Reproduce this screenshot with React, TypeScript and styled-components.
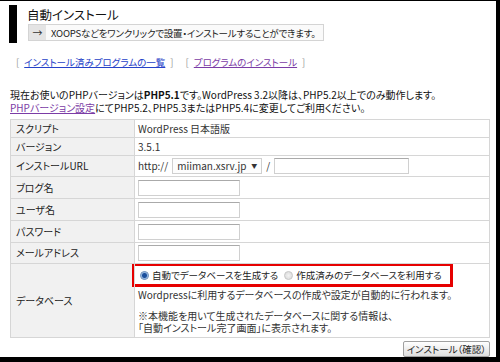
import React from 'react';
import styled, { createGlobalStyle } from 'styled-components';

const GlobalStyle = createGlobalStyle`
  html, body {
    margin: 0;
    padding: 0;
    background: #000;
  }
  body {
    font-family: "Noto Sans CJK JP", "Noto Sans", sans-serif;
    font-feature-settings: "palt";
    color: #222;
  }
  button {
    font-feature-settings: "palt";
  }
`;

const Page = styled.div`
  width: 500px;
  height: 362px;
  box-sizing: border-box;
  background: #fff;
  border-top: 1px solid #000;
  border-right: 4px solid #000;
  border-bottom: 5px solid #000;
  padding: 4px 7px 0 10px;
  font-size: 10px;
  overflow: hidden;
`;

const Header = styled.div`
  margin-left: -1px;
  border-left: 8px solid #000;
  padding: 0 0 3px 10px;
  height: 35px;
`;

const Title = styled.h1`
  margin: 0;
  font-size: 12.5px;
  font-weight: normal;
  line-height: 19px;
  color: #111;
`;

const Lead = styled.div`
  display: inline-flex;
  align-items: center;
  height: 15px;
  width: 294px;
  border: 1px solid #d4d4d4;
  background: #fafafa;
  font-size: 9.5px;
  letter-spacing: -0.2px;
  white-space: nowrap;
  margin-left: 1px;
  overflow: hidden;
`;

const Arrow = styled.span`
  display: flex;
  align-items: center;
  justify-content: center;
  width: 17px;
  height: 100%;
  background: #e4e4e4;
  color: #333;
  margin-right: 5px;
  font-size: 10px;
`;

const LinkRow = styled.div`
  display: flex;
  gap: 12px;
  margin-top: 13px;
  padding-left: 6px;
  font-size: 9.5px;
  line-height: 13px;
`;

const Bracket = styled.span`
  color: #999;
  display: inline-flex;
  gap: 5px;
`;

const Link = styled.a<{ $visited?: boolean }>`
  color: ${(p) => (p.$visited ? '#7b3ca6' : '#2641c8')};
  text-decoration: underline;
`;

const Notice = styled.p`
  margin: 20px 0 0;
  font-size: 10px;
  line-height: 12.5px;
  color: #111;
  white-space: nowrap;
`;

const Table = styled.table`
  margin-top: 5px;
  width: 480px;
  border-collapse: collapse;
  border: 1px solid #d6d6d6;
  font-size: 10px;
  line-height: 12px;
`;

const Row = styled.tr<{ $h: number }>`
  height: ${(p) => p.$h}px;
`;

const Label = styled.th`
  width: 113px;
  text-align: left;
  font-weight: normal;
  background: #f1f1f1;
  border: 1px solid #d6d6d6;
  padding: 0 5px;
  color: #222;
`;

const Cell = styled.td`
  border: 1px solid #d6d6d6;
  padding: 0 3px;
  color: #333;
`;

const TextInput = styled.span<{ $w: number }>`
  display: inline-block;
  vertical-align: middle;
  width: ${(p) => p.$w}px;
  height: 14px;
  border: 1px solid #d0d0d0;
  border-top-color: #aaa;
  background: #fff;
`;

const UrlLine = styled.div`
  display: flex;
  align-items: center;
  gap: 4px;
`;

const Select = styled.span`
  display: inline-flex;
  align-items: center;
  justify-content: space-between;
  width: 80px;
  height: 14px;
  padding: 0 4px;
  border: 1px solid #d0d0d0;
  background: #fdfdfd;
  font-size: 10px;
  &::after {
    content: '▼';
    font-size: 6px;
    color: #333;
  }
`;

const DbCell = styled(Cell)`
  vertical-align: top;
  padding: 0 3px 3px;
`;

const RadioBox = styled.div`
  display: flex;
  align-items: center;
  gap: 6px;
  width: 310px;
  height: 18px;
  margin: -1px 0 0 -6px;
  padding-left: 5px;
  border: 3px solid #e60000;
  font-size: 9.5px;
  white-space: nowrap;
  color: #222;
`;

const Radio = styled.span<{ $on?: boolean }>`
  display: inline-block;
  width: 9px;
  height: 9px;
  border-radius: 50%;
  border: 1px solid ${(p) => (p.$on ? '#6b8db8' : '#c8c8c8')};
  box-sizing: border-box;
  background: ${(p) =>
    p.$on
      ? 'radial-gradient(circle, #1c4f9c 0 2px, #8fb4e0 3px, #eef4fb 4px)'
      : 'radial-gradient(circle, #f2f2f2 0, #dcdcdc 4px)'};
  margin-right: 3px;
`;

const Option = styled.label`
  display: inline-flex;
  align-items: center;
`;

const DbText = styled.p<{ $gap?: number }>`
  margin: ${(p) => p.$gap ?? 2}px 0 0;
  line-height: 12px;
  color: #333;
  white-space: nowrap;
`;

const Footer = styled.div`
  display: flex;
  justify-content: flex-end;
  width: 480px;
  margin-top: 3px;
`;

const Button = styled.button`
  height: 16px;
  padding: 0 3px;
  border: 1px solid #a0a0a0;
  border-radius: 2px;
  background: linear-gradient(#ffffff, #dedede);
  font-family: inherit;
  font-size: 9.5px;
  color: #222;
  line-height: 14px;
`;

export default function App() {
  return (
    <Page>
      <GlobalStyle />
      <Header>
        <Title>自動インストール</Title>
        <Lead>
          <Arrow>→</Arrow>
          XOOPSなどをワンクリックで設置・インストールすることができます。
        </Lead>
      </Header>

      <LinkRow>
        <Bracket>
          [<Link href="#">インストール済みプログラムの一覧</Link>]
        </Bracket>
        <Bracket>
          [<Link href="#" $visited>プログラムのインストール</Link>]
        </Bracket>
      </LinkRow>

      <Notice>
        現在お使いのPHPバージョンは<b>PHP5.1</b>です。WordPress 3.2以降は、PHP5.2以上でのみ動作します。
        <br />
        <Link href="#" $visited>PHPバージョン設定</Link>にてPHP5.2、PHP5.3またはPHP5.4に変更してご利用ください。
      </Notice>

      <Table>
        <tbody>
          <Row $h={18}>
            <Label>スクリプト</Label>
            <Cell>WordPress 日本語版</Cell>
          </Row>
          <Row $h={18}>
            <Label>バージョン</Label>
            <Cell>3.5.1</Cell>
          </Row>
          <Row $h={21}>
            <Label>インストールURL</Label>
            <Cell>
              <UrlLine>
                http://
                <Select>miiman.xsrv.jp</Select>
                /
                <TextInput $w={133} />
              </UrlLine>
            </Cell>
          </Row>
          <Row $h={22}>
            <Label>ブログ名</Label>
            <Cell><TextInput $w={100} /></Cell>
          </Row>
          <Row $h={22}>
            <Label>ユーザ名</Label>
            <Cell><TextInput $w={100} /></Cell>
          </Row>
          <Row $h={22}>
            <Label>パスワード</Label>
            <Cell><TextInput $w={100} /></Cell>
          </Row>
          <Row $h={21}>
            <Label>メールアドレス</Label>
            <Cell><TextInput $w={100} /></Cell>
          </Row>
          <Row $h={71}>
            <Label>データベース</Label>
            <DbCell>
              <RadioBox>
                <Option><Radio $on />自動でデータベースを生成する</Option>
                <Option><Radio />作成済みのデータベースを利用する</Option>
              </RadioBox>
              <DbText>
                Wordpressに利用するデータベースの作成や設定が自動的に行われます。
              </DbText>
              <DbText $gap={9}>
                ※本機能を用いて生成されたデータベースに関する情報は、
                <br />
                「自動インストール完了画面」に表示されます。
              </DbText>
            </DbCell>
          </Row>
        </tbody>
      </Table>

      <Footer>
        <Button>インストール（確認）</Button>
      </Footer>
    </Page>
  );
}
